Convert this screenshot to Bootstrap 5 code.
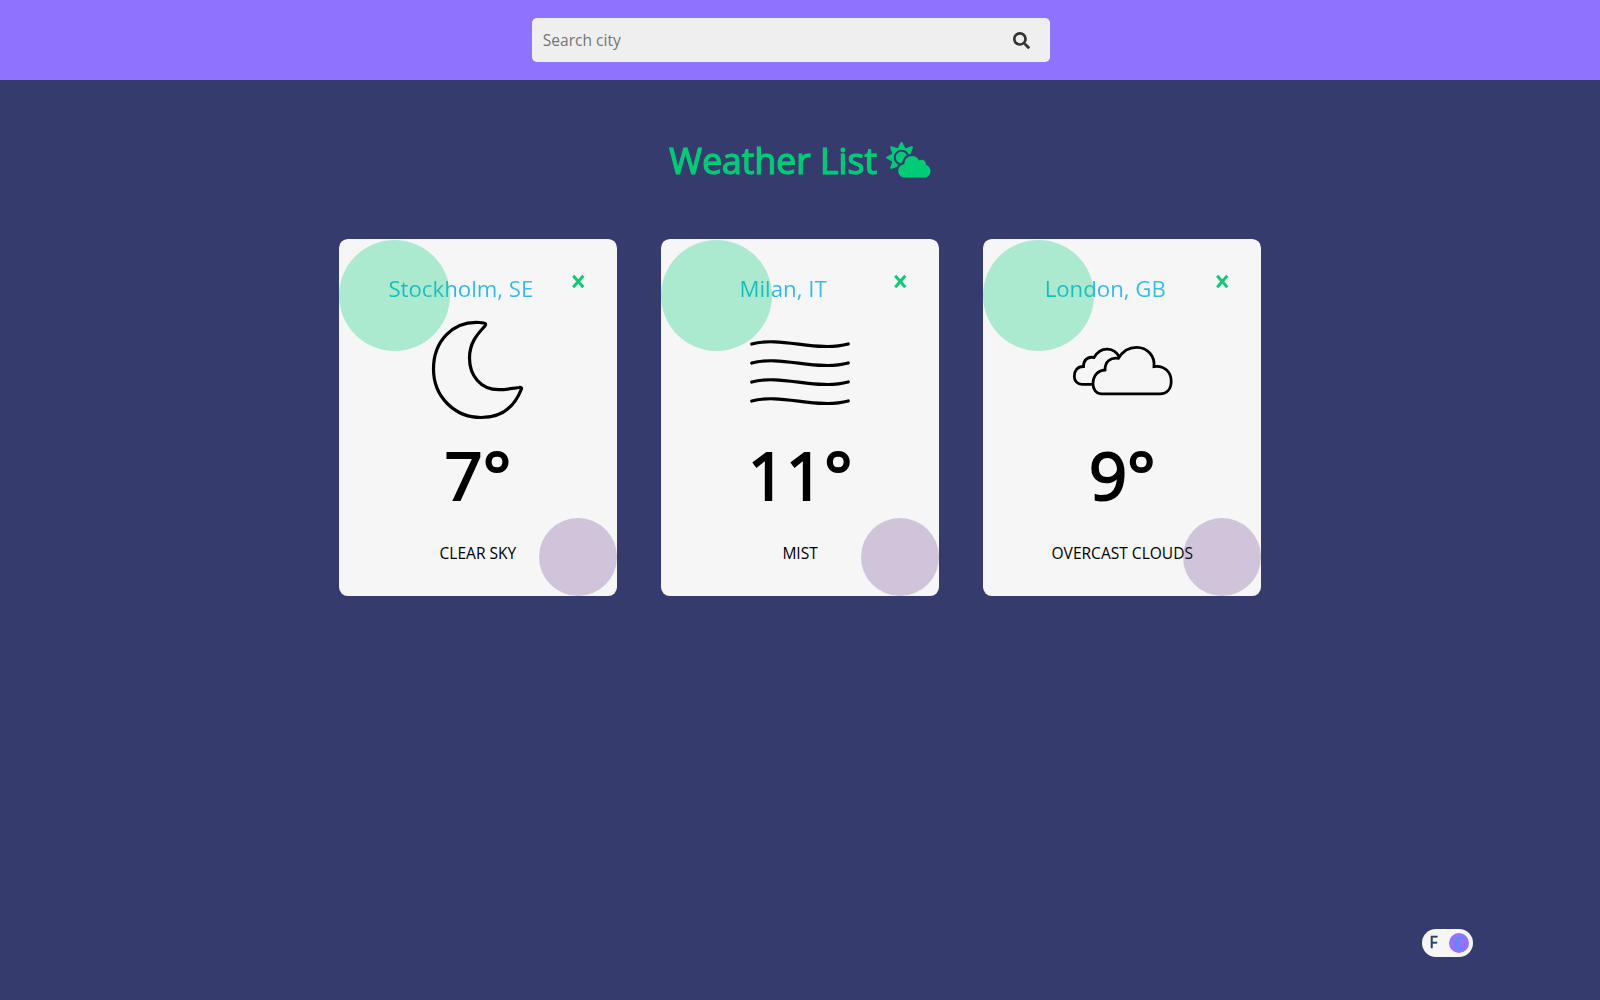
<!DOCTYPE html>
<html lang="en">
<head>
<meta charset="utf-8">
<meta name="viewport" content="width=device-width, initial-scale=1">
<title>Weather List</title>
<link href="https://cdn.jsdelivr.net/npm/bootstrap@5.3.0/dist/css/bootstrap.min.css" rel="stylesheet">
<style>
body{background:#363b6e;font-family:"Open Sans","Noto Sans",sans-serif;color:#000}
.topbar{height:80px;background:#8f73ff;padding:0 18.500px 0 0}
.search-box{width:517.800px;height:44.500px;background:#efefef;border-radius:5px;padding:0 20px 0 11px}
.search-box input{font-size:15.560px;color:#333;padding-top:2px!important}
.search-box input::placeholder{color:#757575;opacity:1}
.search-box svg{width:17px;height:17px;fill:#333}
.page-title{margin:53px 0 0;height:54px;font-size:35.560px;line-height:54px;font-weight:400;-webkit-text-stroke:1.1px #00cc78;color:#00cc78;gap:9px}
.page-title svg{width:44.500px;height:35.600px;fill:#00cc78}
.cities{width:922px;gap:44.4px;margin-top:52.3px}
.city-card{width:277.8px;height:356.700px;background:#f6f6f6;border-radius:8.900px;overflow:hidden}
.city-card::before,.city-card::after{content:"";position:absolute;border-radius:50%}
.city-card::before{left:0;top:.4px;width:111px;height:111px;background:rgba(0,204,120,.3)}
.city-card::after{right:0;bottom:.2px;width:78px;height:78px;background:rgba(80,36,128,.235)}
.city-head{height:76px;padding:33px 28px 0 16px}
.city-name{font-size:22.220px;line-height:33px;font-weight:400;background:linear-gradient(90deg,#1fb5dc,#38bdea);-webkit-background-clip:text;background-clip:text;color:transparent}
.btn-x{width:22px;padding-top:3px!important}
.btn-x svg{width:12.500px;height:13px;stroke:#0ec978;stroke-width:2.900;fill:none;overflow:visible}
.sky{width:100px;height:110px;fill:none;stroke:#000;stroke-width:3.2;stroke-linecap:round;stroke-linejoin:round}
.sky.clouds{stroke-width:2.8;stroke-linecap:butt;stroke-linejoin:miter;overflow:visible}
.temp{margin-top:2px;font-size:66.670px;line-height:96px;font-weight:400;-webkit-text-stroke:2.1px #000}
.desc{margin-top:17.500px;font-size:15.560px;line-height:24px}
.unit{right:127.500px;bottom:43.500px;width:51px;height:28px;border-radius:14px;background:#f6f6f6;padding:0 3.500px 0 8px;font-size:15.560px;font-weight:400;-webkit-text-stroke:.6px;color:#24446a}
.unit .knob{width:20px;height:20px;border-radius:50%;background:#9670ff;color:#3d9cec;line-height:20px}
</style>
<script src="https://cdn.jsdelivr.net/npm/bootstrap@5.3.0/dist/js/bootstrap.bundle.min.js"></script>
</head>
<body class="min-vh-100">
<header class="topbar d-flex justify-content-center align-items-center">
  <form class="search-box d-flex align-items-center">
    <input class="flex-grow-1 border-0 bg-transparent p-0" type="text" placeholder="Search city" aria-label="Search city">
    <button class="btn p-0 border-0 d-flex" type="button" aria-label="Search"><svg viewBox="0 0 512 512"><path d="M505 442.7L405.3 343c-4.500-4.500-10.600-7-17-7H372c27.600-35.300 44-79.700 44-128C416 93.100 322.900 0 208 0S0 93.100 0 208s93.100 208 208 208c48.300 0 92.700-16.400 128-44v16.300c0 6.400 2.500 12.500 7 17l99.700 99.700c9.400 9.400 24.600 9.400 33.900 0l28.300-28.300c9.400-9.400 9.400-24.600.1-34zM208 336c-70.700 0-128-57.200-128-128 0-70.700 57.200-128 128-128 70.700 0 128 57.200 128 128 0 70.700-57.200 128-128 128z"/></svg></button>
  </form>
</header>
<main>
  <h1 class="page-title d-flex justify-content-center align-items-center"><span>Weather List</span>
    <svg viewBox="0 0 640 512"><path d="M575.2 325.700c.2-1.900.8-3.700.8-5.600 0-35.300-28.700-64-64-64-12.600 0-24.200 3.800-34.100 10-17.600-38.800-56.500-66-101.900-66-61.800 0-112 50.100-112 112 0 3 .7 5.800.9 8.700-49.600 3.700-88.900 44.700-88.900 95.300 0 53 43 96 96 96h272c53 0 96-43 96-96 0-42.100-27.200-77.400-64.800-90.400zm-430.400-22.600c-43.700-43.700-43.700-114.700 0-158.300 43.700-43.700 114.700-43.700 158.400 0 9.700 9.700 16.900 20.900 22.300 32.700 9.800-3.700 20.100-6 30.700-7.500L386 81.100c4-11.900-7.300-23.100-19.200-19.200L279 91.200 237.500 8.400C232-2.800 216-2.800 210.400 8.400L169 91.200 81.100 61.900C69.300 58 58 69.300 61.900 81.100l29.300 87.800-82.800 41.500c-11.200 5.600-11.200 21.500 0 27.100l82.800 41.400-29.300 87.800c-4 11.900 7.300 23.100 19.200 19.200l76.100-25.300c6.100-12.400 14-23.700 23.600-33.500-13.100-5.400-25.400-13.400-36-24zm-4.800-79.200c0 40.800 29.300 74.800 67.900 82.300 8-4.700 16.300-8.800 25.200-11.700 5.400-44.300 31-82.500 67.400-105C287.300 160.400 258 140 224 140c-46.300 0-84 37.600-84 83.900z"/></svg>
  </h1>
  <section class="cities d-flex mx-auto">
    <article class="city-card position-relative d-flex flex-column align-items-center flex-shrink-0">
      <div class="city-head d-flex w-100"><div class="flex-grow-1 text-center"><span class="city-name">Stockholm, SE</span></div><button class="btn-x btn p-0 border-0 align-self-start d-flex justify-content-center" type="button" aria-label="Remove"><svg viewBox="0 0 12.5 13"><path d="M1.200.8L11.300 12.200M11.300.8L1.200 12.200"/></svg></button></div>
      <svg class="sky" viewBox="428 315 100 110"><path d="M479 322.500C453 321 433.500 341 433.500 369C433.500 397 455 417.500 481 417.500C500 417.500 514 408 521.200 389.500C522 387.700 521 387.200 519 387.500C511 388.500 506 389.700 499 389.700C480 389.700 469.500 375 469.500 358C469.500 344 476 335.500 484.500 326.500C486.500 324 486.500 323 479 322.500Z"/></svg>
      <div class="temp">7°</div><div class="desc">CLEAR SKY</div>
    </article>
    <article class="city-card position-relative d-flex flex-column align-items-center flex-shrink-0">
      <div class="city-head d-flex w-100"><div class="flex-grow-1 text-center"><span class="city-name">Milan, IT</span></div><button class="btn-x btn p-0 border-0 align-self-start d-flex justify-content-center" type="button" aria-label="Remove"><svg viewBox="0 0 12.5 13"><path d="M1.200.8L11.300 12.200M11.300.8L1.200 12.200"/></svg></button></div>
      <svg class="sky" viewBox="750 315 100 110"><path d="M751.800 344C781 336 817 352.500 848.200 344M751.800 363C781 355 817 371.500 848.200 363M751.800 382C781 374 817 390.500 848.200 382M751.800 401C781 393 817 409.500 848.200 401"/></svg>
      <div class="temp">11°</div><div class="desc">MIST</div>
    </article>
    <article class="city-card position-relative d-flex flex-column align-items-center flex-shrink-0">
      <div class="city-head d-flex w-100"><div class="flex-grow-1 text-center"><span class="city-name">London, GB</span></div><button class="btn-x btn p-0 border-0 align-self-start d-flex justify-content-center" type="button" aria-label="Remove"><svg viewBox="0 0 12.5 13"><path d="M1.200.8L11.300 12.200M11.300.8L1.200 12.200"/></svg></button></div>
      <svg class="sky clouds" viewBox="1072 315 100 110"><path d="M1100 393.800H1101C1096 393.800 1093 389 1093 384C1093 376 1097.500 370.500 1105 370C1105 361.500 1110.500 357 1118.500 358.300C1123 350.500 1129.500 347.300 1136.500 347.300C1147.500 347.300 1155 356 1154 366.500C1164 365 1171.200 372 1171.200 381C1171.200 389 1167 393.800 1160 393.800H1100M1093.500 384.300H1082C1077 384.300 1074.300 380.500 1074.300 376.500C1074.300 371 1077 366.500 1083.500 366.500C1083.500 360 1087.500 356.300 1094 357.500C1101 345.500 1114.500 347 1119.500 357.500"/></svg>
      <div class="temp">9°</div><div class="desc">OVERCAST CLOUDS</div>
    </article>
  </section>
</main>
<div class="unit position-fixed d-flex align-items-center justify-content-between"><span>F</span><span class="knob text-center">C</span></div>
</body>
</html>
